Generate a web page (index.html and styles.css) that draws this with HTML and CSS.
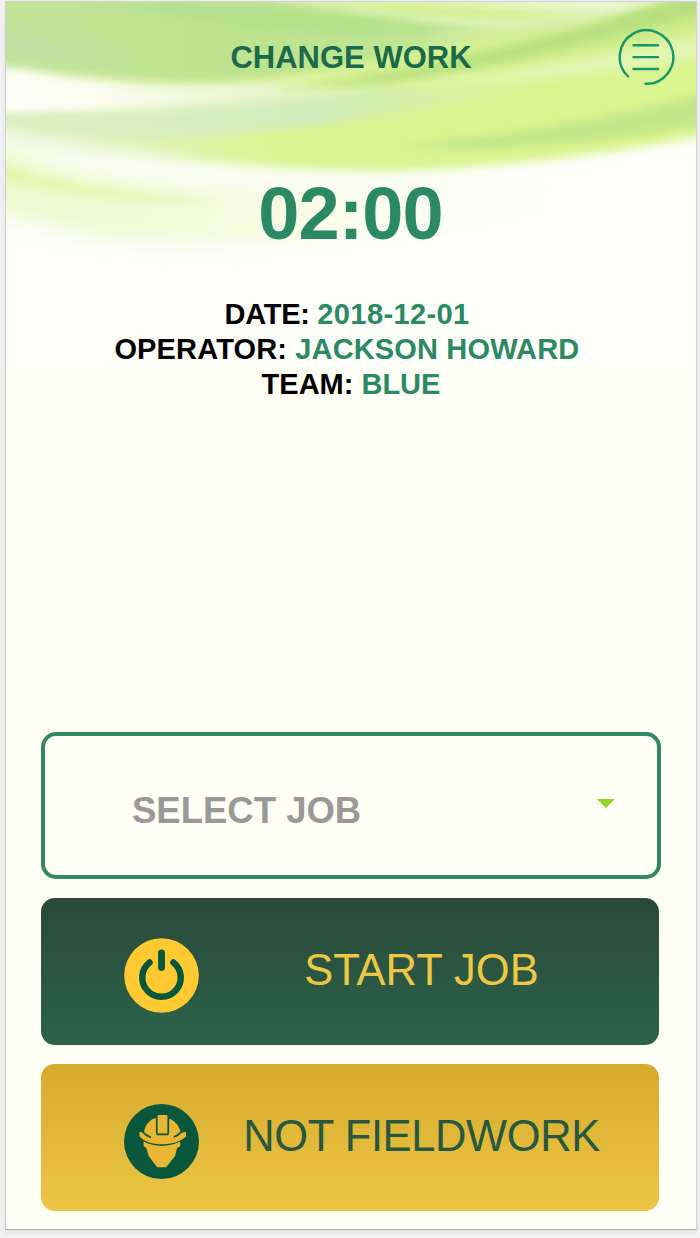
FILE: index.html
```
<!DOCTYPE html>
<html lang="en">
<head>
  <meta charset="UTF-8">
  <title>Change Work</title>
  <meta name="viewport" content="width=device-width, initial-scale=1.0">
  <link rel="stylesheet" href="styles.css">
</head>
<body>

  <div class="screen">
    <svg class="waves" viewBox="6 2 690 364" preserveAspectRatio="none" aria-hidden="true">
      <defs>
        <filter id="soft" filterUnits="userSpaceOnUse" x="-60" y="-60" width="820" height="480"><feGaussianBlur stdDeviation="8 4.5"/></filter>
        <filter id="softer" filterUnits="userSpaceOnUse" x="-60" y="-60" width="820" height="480"><feGaussianBlur stdDeviation="14 9"/></filter>
        <linearGradient id="lime" x1="0" x2="1">
          <stop offset="0" stop-color="#eaf6d8"/>
          <stop offset="0.2" stop-color="#e2f4bd"/>
          <stop offset="0.42" stop-color="#d9f591"/>
          <stop offset="1" stop-color="#d9f58e"/>
        </linearGradient>
        <linearGradient id="leaf" x1="0" x2="1">
          <stop offset="0" stop-color="#c1e495"/>
          <stop offset="0.5" stop-color="#bde38f"/>
          <stop offset="1" stop-color="#c4e99a"/>
        </linearGradient>
        <linearGradient id="light" x1="0" x2="1">
          <stop offset="0" stop-color="#ffffff"/>
          <stop offset="0.25" stop-color="#fbfdee"/>
          <stop offset="0.5" stop-color="#ecf7d6"/>
          <stop offset="1" stop-color="#d9f2b4" stop-opacity="0"/>
        </linearGradient>
        <linearGradient id="mint" x1="0" x2="1">
          <stop offset="0" stop-color="#dff1c6"/>
          <stop offset="0.55" stop-color="#d2edbb"/>
          <stop offset="1" stop-color="#d9f4a0" stop-opacity="0"/>
        </linearGradient>
        <linearGradient id="fade" x1="0" x2="1">
          <stop offset="0" stop-color="#ebf9cc"/>
          <stop offset="0.5" stop-color="#f7fce2"/>
          <stop offset="1" stop-color="#fefefa" stop-opacity="0"/>
        </linearGradient>
      </defs>
      <rect x="6" y="2" width="690" height="364" fill="#fefefb"/>
      <path filter="url(#softer)" fill="url(#fade)" d="M-50 120 C150 160 350 185 620 175 L560 212 C400 230 300 248 160 244 C90 241 30 222 -50 200Z"/>
      <path filter="url(#soft)" fill="#e0f6a4" opacity="0.8" d="M-50 150 C30 175 120 192 220 201 C140 206 50 194 -50 170Z"/>
      <path filter="url(#softer)" fill="#fafdf0" d="M-30 132 C130 155 240 162 480 166 C380 202 200 198 60 170Z"/>
      <path filter="url(#soft)" fill="url(#lime)" d="M-50 -50 H750 V127 C600 158 460 173 350 170 C220 166 80 152 -50 122Z"/>
      <path filter="url(#soft)" fill="url(#mint)" d="M-50 112 C140 118 260 90 400 88 C500 84 570 78 620 76 C500 94 380 122 240 133 C130 145 40 138 -50 118Z"/>
      <path filter="url(#soft)" fill="#eef7e2" opacity="0.8" d="M-50 124 C40 138 110 148 210 155 C120 158 40 150 -50 136Z"/>
      <path filter="url(#soft)" fill="url(#light)" d="M-50 52 C80 88 180 94 330 74 L520 50 L500 70 C350 92 210 118 -50 115Z"/>
      <path filter="url(#soft)" fill="#d2ecb0" opacity="0.8" d="M-50 113 C90 116 180 109 300 98 C200 114 100 122 -50 119Z"/>
      <path filter="url(#soft)" fill="url(#leaf)" d="M-50 -50 H590 C560 10 480 45 330 68 C240 85 150 89 -50 56Z"/>
      <path filter="url(#soft)" fill="#b3e08b" opacity="0.75" d="M60 -5 C200 -5 330 18 480 24 C400 38 270 40 150 8Z"/>
      <path filter="url(#softer)" fill="#c2e0ac" opacity="0.8" d="M-50 24 C20 30 80 45 130 58 C90 64 20 62 -50 50Z"/>
      <path filter="url(#soft)" fill="#e0f5bf" d="M270 -12 H700 C640 16 570 30 500 31 C440 25 380 12 270 0Z"/>
      <path filter="url(#soft)" fill="#d3f193" d="M310 2 C400 1 500 10 600 6 C550 25 450 25 310 2Z"/>
      <path filter="url(#soft)" fill="#f0fadb" d="M430 -10 C500 4 580 8 690 -12 C620 18 520 14 430 -10Z"/>
      <path filter="url(#soft)" fill="#cfee8c" d="M760 -20 C620 22 500 45 270 88 C380 92 560 60 760 30Z"/>
      <path filter="url(#soft)" fill="#b7df80" d="M760 -30 C640 12 520 50 320 87 C440 82 560 48 760 2Z"/>
      <path filter="url(#soft)" fill="#cdeb9c" opacity="0.8" d="M440 28 C500 30 560 22 600 14 C560 36 500 44 430 46Z"/>
      <path filter="url(#soft)" fill="#e2f6b0" d="M760 24 C650 44 580 62 400 86 C520 84 640 72 760 48Z"/>
      <path filter="url(#soft)" fill="#bfe48b" opacity="0.9" d="M760 78 C660 108 550 132 400 146 C500 154 640 140 760 112Z"/>
    </svg>

    <header class="header">
      <h1>CHANGE WORK</h1>
      <button class="menu" aria-label="Menu">
        <svg viewBox="0 0 60 60" fill="none" stroke="#17966a" stroke-width="2.4" stroke-linecap="round">
          <path d="M13.1 49.5 A26.8 26.8 0 1 1 30.5 56.8"/>
          <path d="M18.5 18.2 H43 M18.5 30.1 H43 M18.5 42 H43"/>
        </svg>
      </button>
    </header>

    <div class="time">02:00</div>

    <div class="info">
      <p class="date">DATE: <span>2018-12-01</span>&nbsp;</p>
      <p class="operator">OPERATOR: <span>JACKSON HOWARD</span>&nbsp;</p>
      <p>TEAM: <span>BLUE</span></p>
    </div>

    <div class="actions">
      <div class="select">
        <span>SELECT JOB</span>
        <i class="arrow"></i>
      </div>

      <button class="btn start">
        <svg class="icon" viewBox="0 0 74 74" fill="none" stroke="#08573c" stroke-linecap="round">
          <circle cx="37" cy="37" r="36.8" fill="#ffc931" stroke="none"/>
          <path stroke-width="6.8" d="M37 14.8 V29.2"/>
          <path stroke-width="6.4" d="M25.2 24.1 A19 19 0 1 0 48.8 24.1"/>
        </svg>
        <span>START JOB</span>
      </button>

      <button class="btn field">
        <svg class="icon" viewBox="0 0 222 222">
          <circle cx="111" cy="111" r="111" fill="#08573c"/>
          <path fill="#e8b631" d="M58 111 Q111 137 166 111 L167 124 L157 130 L151 154 L125 187 H98 L73 154 L66 130 L58 124Z"/>
          <path fill="#e8b631" d="M59 86 C62 61 77 45 96 41 H127 C147 47 164 62 168 86 L183 82 L184 96 C150 127 73 127 46 96 L46 82Z"/>
          <path fill="none" stroke="#08573c" stroke-width="5" stroke-linecap="round" d="M57 84 C63 91 70 95 78 98 M168 84 C162 91 156 94 149 97"/>
          <rect x="97" y="30" width="34" height="60" rx="5" fill="#e8b631" stroke="#08573c" stroke-width="5"/>
        </svg>
        <span>NOT FIELDWORK</span>
      </button>
    </div>
  </div>

</body>
</html>
```
FILE: styles.css
```
* {
  box-sizing: border-box;
}

body {
  margin: 0;
  padding: 1px 3px 0 5px;
  height: 1238px;
  background: #f3f3f4;
  font-family: "Liberation Sans", Arial, sans-serif;
  overflow: hidden;
}

.screen {
  position: relative;
  height: 1229px;
  padding: 0 36px 18px 35px;
  display: flex;
  flex-direction: column;
  background: #fffff6;
  border: 1px solid #d0d0d6;
  border-bottom-color: #aaa;
  box-shadow: 0 2px 6px rgba(0, 0, 0, 0.08);
}

/* background artwork behind the header */
.waves {
  position: absolute;
  top: 0;
  left: 0;
  width: 100%;
  height: 364px;
}

.header,
.time,
.info,
.actions {
  position: relative;
}

.header {
  height: 110px;
  display: grid;
  grid-template-columns: 60px 1fr 60px;
  align-items: center;
  margin-right: -15px;
  margin-left: -15px;
}

h1 {
  grid-column: 2;
  margin: 0;
  padding: 2px 0 0 1px;
  font-size: 31px;
  line-height: 36px;
  text-align: center;
  color: #1b6a4b;
}

button {
  font-family: inherit;
  border: none;
  cursor: pointer;
}

.menu {
  width: 60px;
  height: 60px;
  padding: 0;
  background: none;
}

.menu svg {
  display: block;
}

.time {
  margin-top: 60px;
  font-size: 74px;
  font-weight: bold;
  line-height: 84px;
  letter-spacing: -1px;
  text-align: center;
  color: #2b8a64;
}

.info {
  margin-top: 41px;
  padding-left: 1px;
  font-size: 29px;
  font-weight: bold;
  line-height: 35px;
  text-align: center;
  color: #000;
}

.info p {
  margin: 0;
}

.info span {
  color: #2b8a64;
}

.info .date {
  letter-spacing: -0.3px;
}

.info .date span {
  letter-spacing: 0.4px;
}

.info .operator {
  letter-spacing: 0.15px;
}

.actions {
  margin-top: auto;
  display: flex;
  flex-direction: column;
  gap: 19px;
}

.select {
  height: 147px;
  margin-right: -1px;
  padding: 11px 42px 0 87px;
  display: flex;
  align-items: center;
  justify-content: space-between;
  border: 4px solid #348965;
  border-radius: 15px;
  font-size: 36.5px;
  font-weight: bold;
  color: #999;
}

.arrow {
  margin-bottom: 15px;
  border: 9px solid transparent;
  border-top-color: #8fd926;
  border-bottom: none;
}

.btn {
  height: 147px;
  margin-right: 1px;
  padding: 0;
  display: grid;
  grid-template-columns: 83px 74px 1fr;
  align-items: center;
  border-radius: 14px;
  font-size: 43.5px;
}

.btn span {
  padding: 0 14px 3px 0;
  white-space: nowrap;
}

.icon {
  grid-column: 2;
  width: 75px;
  height: 75px;
  margin-top: 7px;
}

.start {
  background: linear-gradient(#2b493a, #2b634a);
  color: #edc845;
}

.field {
  background: linear-gradient(#d6aa2d, #edc645);
  color: #28583f;
  letter-spacing: -0.4px;
}
```
